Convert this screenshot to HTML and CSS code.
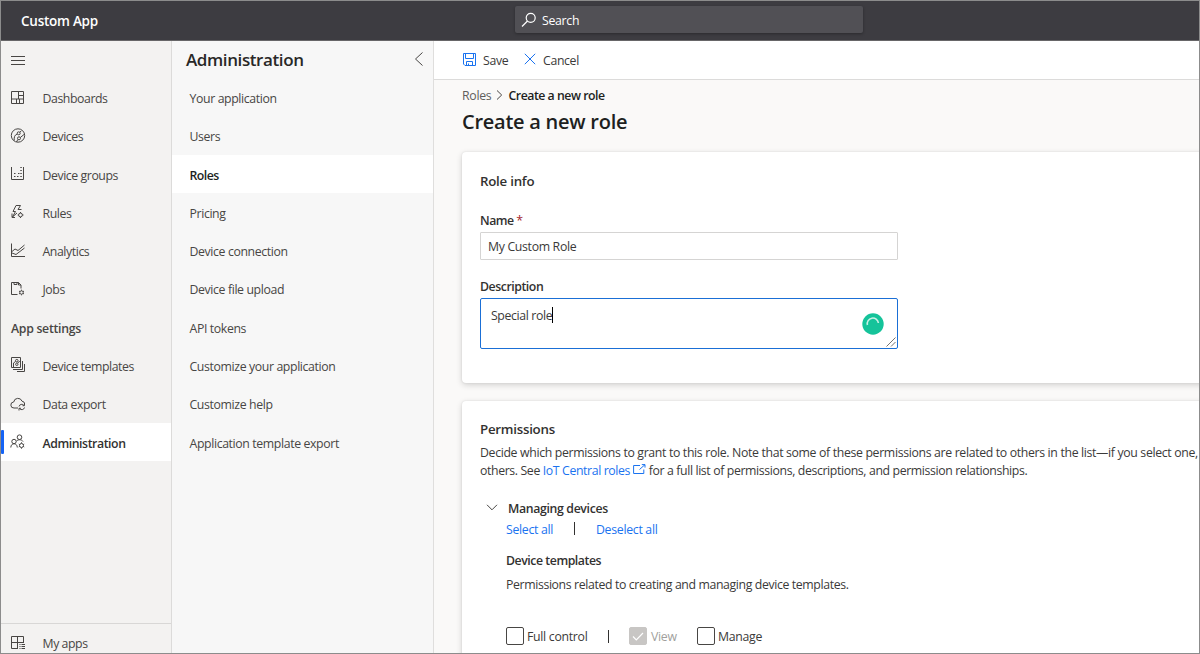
FILE: index.html
```html
<!DOCTYPE html>
<html lang="en">
<head>
<meta charset="utf-8">
<title>Custom App</title>
<link rel="stylesheet" href="styles.css">
</head>
<body>
<div class="app">
  <header class="topbar">
    <div class="brand">Custom App</div>
    <div class="search">
      <svg class="search-icon" width="16" height="16" viewBox="0 0 16 16"><circle cx="9.7" cy="5.8" r="4.5"/><path d="M6.5 9 1 14.5"/></svg>
      <span>Search</span>
    </div>
  </header>
  <div class="body">
    <nav class="nav">
      <div class="item menu"><svg class="icon" viewBox="0 0 16 16"><path d="M1 4.500h14M1 8.500h14M1 12.500h14"/></svg></div>
      <a class="item"><svg class="icon" viewBox="0 0 16 16"><path d="M1.5 1.5h12v12h-12zM8.5 1.5v7.500M1.500 9h12M8.500 5.500h5M6.500 9v4.500M9.500 9v4.500"/></svg><span>Dashboards</span></a>
      <a class="item"><svg class="icon" viewBox="0 0 16 16"><circle cx="8" cy="7.500" r="6.700"/><circle cx="8.700" cy="5.300" r="1.500"/><circle cx="9" cy="10.300" r="1.500"/><path d="M7.300 6C4.500 7 4 9 4.200 12.500M10.300 9.500 14 6.500M9.800 4.300 11.300 2.800M7.800 11.500 6.500 14"/></svg><span>Devices</span></a>
      <a class="item"><svg class="icon" viewBox="0 0 16 16"><path d="M1.500 1v12.500h12V1"/><path class="dots" d="M4 10.500h1.500M4 7.500h1.500M7 10.500h1.500M8 7.500h1.500M10.300 10.500h1.500M10.300 7.500h1.500M10.300 4.500h1.500M10.300 1.500h1.500"/></svg><span>Device groups</span></a>
      <a class="item"><svg class="icon" viewBox="0 0 16 16"><path d="M6 1.500h4.500L8 5.500h3.500M6 1.500 3 7.500h2.500l-3 5.500L7 9"/><circle cx="10.500" cy="11" r="1.900"/><path d="M10.500 8v1M10.500 13v1M7.700 11h1M12.500 11h1M2 9.500v4h3"/></svg><span>Rules</span></a>
      <a class="item"><svg class="icon" viewBox="0 0 16 16"><path d="M1.500 .5v13H15M2 8.500 5 6l3 1.500L14.500 2M2 10l4 1.500L14.500 5"/></svg><span>Analytics</span></a>
      <a class="item"><svg class="icon" viewBox="0 0 16 16"><path d="M7.500 13.500h-6v-12h7L11 4v3.500M4 1.500v2h3v-2M8.500 1.500V4H11"/><circle cx="11.500" cy="11.500" r="1.700"/><path d="M11.500 8.700v1M11.500 13.300v1M9 10l1 .7M13 12.300l1 .7M9 13l1-.7M13 10.700l1-.7"/></svg><span>Jobs</span></a>
      <div class="item heading"><span>App settings</span></div>
      <a class="item"><svg class="icon" viewBox="0 0 16 16"><path d="M1.500 .5h9v10h-9zM12.500 4v8.500H4M14.500 7v7.500H7M3 12.500h2"/><circle cx="6.800" cy="3.700" r="1.300"/><circle cx="6.800" cy="7.300" r="1.200"/><path d="M5.500 4.500 3.500 6v4M7.800 6l2-2"/></svg><span>Device templates</span></a>
      <a class="item"><svg class="icon" viewBox="0 0 16 16"><path d="M8 12H4a3 3 0 0 1-.3-6A4.300 4.300 0 0 1 12 5.200 3 3 0 0 1 14.700 8"/><path d="M9 10.500a2.800 2.800 0 0 1 5-1M14.500 7.500v2.200h-2M14.500 11.500a2.800 2.800 0 0 1-5 1M9 14.500v-2.200h2"/></svg><span>Data export</span></a>
      <a class="item active"><svg class="icon" viewBox="0 0 16 16"><circle cx="9.500" cy="3.200" r="2.300"/><circle cx="4" cy="7.500" r="2.200"/><path d="M.8 13.500c0-5 6.500-5 6.500 0M6.500 7c1.500-1.500 5-2 6.500.5"/><circle cx="11.500" cy="11.500" r="2"/><path d="M11.500 8.300v1M11.500 13.700v1M8.800 10l1 .6M13.200 12.400l1 .6M8.800 13l1-.6M13.200 10.600l1-.6"/></svg><span>Administration</span></a>
      <a class="item bottom"><svg class="icon" viewBox="0 0 16 16"><path d="M8 13.500H1.500v-12h12V8M1.500 7.500h12M7.500 1.500v12M9.500 9.500h1M9.500 11.500h1M9.500 13.500h1M11.500 9.500H15M11.500 11.500H15M11.500 13.500H15"/></svg><span>My apps</span></a>
    </nav>
    <aside class="subnav">
      <div class="subnav-head"><h2>Administration</h2><svg width="10" height="16" viewBox="0 0 10 16"><path d="M8.500 1.500 1.500 8l7 6.500"/></svg></div>
      <a class="sub">Your application</a>
      <a class="sub">Users</a>
      <a class="sub current">Roles</a>
      <a class="sub">Pricing</a>
      <a class="sub">Device connection</a>
      <a class="sub">Device file upload</a>
      <a class="sub">API tokens</a>
      <a class="sub">Customize your application</a>
      <a class="sub">Customize help</a>
      <a class="sub">Application template export</a>
    </aside>
    <main class="main">
      <div class="commands">
        <svg class="blue" width="13" height="13" viewBox="0 0 13 13"><path d="M.5.500h12v12H2L.5 11zM2.500.500v5h8v-5M3.500 12.500v-4h6v4M5.500 12.500v-2"/></svg>
        <span class="save">Save</span>
        <svg class="blue" width="12" height="12" viewBox="0 0 12 12"><path d="M.8.800l10.400 10.400M11.200.800.8 11.200"/></svg>
        <span class="cancel">Cancel</span>
      </div>
      <div class="crumbs"><span>Roles</span><svg width="7" height="12" viewBox="0 0 7 12"><path d="M1 1.500 5.700 6 1 10.500"/></svg><b>Create a new role</b></div>
      <h1>Create a new role</h1>
      <section class="card info">
        <h3>Role info</h3>
        <label class="name-label">Name <span class="star">*</span></label>
        <div class="input">My Custom Role</div>
        <label>Description</label>
        <div class="textarea"><span class="typed">Special role</span><span class="caret"></span>
          <svg class="badge" width="22" height="22" viewBox="0 0 22 22"><circle cx="11" cy="11" r="10.700"/><path d="M5.400 12A5.600 5.600 0 1 1 16.400 10"/></svg>
          <svg class="grip" width="10" height="10" viewBox="0 0 10 10"><path d="M.5 9.500l9-9M5 9.500l4.500-4.500"/></svg>
        </div>
      </section>
      <section class="card perms">
        <h3>Permissions</h3>
        <p class="intro"><span class="line1">Decide which permissions to grant to this role. Note that some of these permissions are related to others in the list—if you select one,</span><br><span class="line2">others. See <a>IoT Central roles <svg class="ext blue" width="13" height="11" viewBox="0 0 13 11"><path d="M7 1.500H.6v8h10.200V5.500M6.500 5.500 12 .600M8.800.600H12v3"/></svg></a> for a full list of permissions, descriptions, and permission relationships.</span></p>
        <div class="group"><svg width="12" height="7" viewBox="0 0 12 7"><path d="M1 .8 6 5.800l5-5"/></svg><b>Managing devices</b></div>
        <div class="links"><a class="select">Select all</a><i></i><a class="deselect">Deselect all</a></div>
        <h4>Device templates</h4>
        <p class="desc">Permissions related to creating and managing device templates.</p>
        <div class="checks">
          <span class="box"></span><span class="full">Full control</span><i></i>
          <span class="box checked"><svg width="12" height="9" viewBox="0 0 12 9"><path d="M1 4.500 4.300 7.800 11 1"/></svg></span><span class="view">View</span>
          <span class="box"></span><span class="manage">Manage</span>
        </div>
      </section>
    </main>
  </div>
</div>
</body>
</html>
```
FILE: styles.css
```css
* { box-sizing: border-box; }
body { margin: 0; font-family: "Open Sans", "Noto Sans", sans-serif; font-size: 12.300px; letter-spacing: -0.38px; color: #484644; }
h1, h2, h3, h4, p { margin: 0; }
b, h1, h2, h3, h4 { font-weight: 600; }
svg { fill: none; stroke: #484644; stroke-width: 1; flex: none; }
.blue { stroke: #1a73f0; }
.app { width: 1200px; height: 654px; border: 1px solid #8c8c8c; overflow: hidden; display: flex; flex-direction: column; white-space: nowrap; }
.topbar { height: 40px; background: #3d3c41; border-bottom: 1px solid #676668; flex: none; display: flex; align-items: center; padding-left: 20px; }
.brand { color: #fff; font-weight: 600; font-size: 13.500px; letter-spacing: -0.25px; width: 494px; }
.search { width: 348px; height: 27px; margin-bottom: 2px; background: #515055; border-radius: 2px; box-shadow: 0 1px 3px rgba(0,0,0,.3); display: flex; align-items: center; padding-left: 6px; gap: 5px; color: #fff; letter-spacing: -0.3px; }
.search span { padding-top: 1px; }
.search-icon { stroke: #fff; stroke-width: 1.200; }
.body { flex: 1; min-height: 0; display: grid; grid-template-columns: 171px 262px minmax(0, 1fr); }
.nav { background: #f3f2f1; border-right: 1px solid #dcdbda; display: flex; flex-direction: column; min-height: 0; }
.item { height: 38.280px; flex: none; display: flex; align-items: center; gap: 16.500px; padding-left: 9px; letter-spacing: -0.43px; }
.item span { padding-top: 2px; }
.menu { height: 37.500px; }
.icon { width: 16px; height: 16px; }
.heading { font-weight: 600; padding-left: 10px; letter-spacing: -0.3px; }
.active { background: #fff; color: #323130; font-weight: 600; position: relative; }
.active::before { content: ""; position: absolute; left: 0; top: 7px; width: 3px; height: 24px; background: #1463f5; border-radius: 1px; }
.bottom { margin-top: auto; height: 30px; border-top: 1px solid #d8d7d6; padding-top: 8px; }
.subnav { background: #f7f7f7; border-right: 1px solid #dfdedd; }
.subnav-head { height: 37.500px; display: flex; align-items: center; justify-content: space-between; padding: 0 9px 0 14px; }
.subnav-head h2 { font-size: 17px; letter-spacing: -0.4px; color: #292827; }
.subnav-head svg { margin-bottom: 2px; }
.sub { height: 38.280px; padding: 2px 0 0 17.500px; display: flex; align-items: center; }
.current { background: #fff; color: #201f1e; font-weight: 600; letter-spacing: -0.5px; }
.main { background: #faf9f8; overflow: hidden; min-width: 0; color: #3b3a39; }
.commands { height: 39px; background: #fff; border-bottom: 1px solid #dcdbda; display: flex; align-items: center; padding: 0 0 2px 28.500px; }
.save { margin: 0 15px 0 7.500px; width: 25.500px; }
.cancel { margin-left: 7.500px; }
.save, .cancel { padding-top: 2px; letter-spacing: -0.35px; }
.crumbs { display: flex; align-items: center; height: 18px; margin: 6px 0 0 28px; }
.crumbs span { color: #605e5c; width: 29px; margin-right: 5px; letter-spacing: -0.3px; }
.crumbs b { margin-left: 5.500px; color: #201f1e; letter-spacing: -0.48px; }
h1 { font-size: 20px; line-height: 28px; letter-spacing: -0.25px; margin: 4px 0 0 28px; color: #201f1e; }
.card { background: #fff; margin-left: 28px; padding-left: 18px; border-radius: 4px 0 0 4px; box-shadow: 0 2px 6px rgba(0,0,0,.16), 0 0 2px rgba(0,0,0,.1); width: 760px; }
.info { height: 231px; margin-top: 16px; padding-top: 19px; display: flex; flex-direction: column; }
h3 { font-size: 13.300px; line-height: 20px; letter-spacing: -0.25px; color: #323130; }
label { font-weight: 600; line-height: 18px; margin-top: 17px; color: #323130; letter-spacing: -0.45px; }
.info h3 { margin-bottom: 1px; }
.name-label { margin-top: 20px; letter-spacing: -0.5px; }
.star { color: #a4262c; font-weight: 400; }
.input { width: 418px; height: 28px; margin-top: 2px; border: 1px solid #d5d4d3; border-radius: 1px; padding-left: 7px; line-height: 28px; letter-spacing: -0.33px; }
.input + label { margin-top: 18px; }
.textarea { position: relative; width: 418px; height: 51px; margin-top: 2px; border: 1px solid #1a6fd6; border-radius: 2px; padding: 8px 10px; display: flex; align-items: flex-start; }
.typed { line-height: 17px; }
.caret { width: 1px; height: 16px; background: #000; }
.badge { position: absolute; right: 13px; top: 14px; fill: #15c39a; stroke: none; }
.badge path { fill: none; stroke: #c8f1e6; stroke-width: 1.600; }
.grip { position: absolute; right: 1px; bottom: 1px; stroke: #767472; }
.perms { margin-top: 18px; height: 300px; padding-top: 18px; }
.intro { margin-top: 5px; line-height: 18px; }
.line1 { letter-spacing: -0.345px; }
.perms a { color: #1a73f0; }
.group { display: flex; align-items: center; gap: 10px; height: 20px; margin: 18px 0 0 6px; }
.group svg { margin-bottom: 1px; }
.links { display: flex; align-items: center; height: 20px; margin: 1px 0 0 26px; letter-spacing: -0.3px; }
.links i { width: 1px; height: 13px; background: #323130; margin: 0 21px 2px 0; }
.select { width: 68px; }
h4, b { color: #323130; letter-spacing: -0.35px; }
h4 { margin: 12px 0 0 26px; line-height: 20px; letter-spacing: -0.45px; }
.desc { margin: 4px 0 0 26px; line-height: 20px; }
.checks { display: flex; align-items: center; margin: 32px 0 0 26px; height: 18px; letter-spacing: -0.3px; }
.checks i { width: 1px; height: 13px; background: #323130; margin-right: 20px; }
.box { width: 18px; height: 18px; flex: none; border: 1px solid #484644; border-radius: 2px; margin-right: 3px; display: flex; align-items: center; justify-content: center; }
.checked { background: #c8c6c4; border-color: #c8c6c4; margin-right: 4px; }
.checked svg { stroke: #fff; stroke-width: 1.200; }
.full { width: 81px; }
.view { width: 46px; color: #a19f9d; }
```
